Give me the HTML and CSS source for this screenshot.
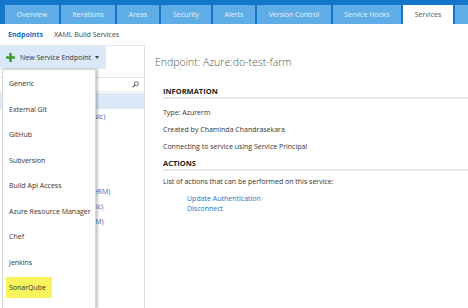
FILE: index.html
```html
<!DOCTYPE html>
<html lang="en">
<head>
  <meta charset="UTF-8" />
  <title>Services - Endpoints</title>
  <link rel="stylesheet" href="styles.css">
</head>
<body>
  <div class="tabs">
    <div class="tab">Overview</div>
    <div class="tab">Iterations</div>
    <div class="tab">Areas</div>
    <div class="tab">Security</div>
    <div class="tab">Alerts</div>
    <div class="tab">Version Control</div>
    <div class="tab">Service Hooks</div>
    <div class="tab tab-active">Services</div>
    <div class="tab"></div>
  </div>

  <div class="subnav">
    <span class="subnav-link subnav-link-active">Endpoints</span>
    <span class="subnav-link">XAML Build Services</span>
  </div>

  <div class="main">
    <div class="left-pane">
      <div class="toolbar">
        <div class="new-btn">
          <svg class="plus" width="9" height="9" viewBox="0 0 9 9"><path d="M3.2 0h2.6v3.2H9v2.6H5.8V9H3.2V5.8H0V3.2h3.2z" fill="#3c9a35"/></svg>
          <span>New Service Endpoint</span>
          <span class="caret"></span>
        </div>
      </div>
      <div class="search">
        <svg width="7" height="7" viewBox="0 0 7 7"><circle cx="4.3" cy="2.7" r="2" fill="none" stroke="#555" stroke-width="0.9"/><path d="M2.9 4.1L0.6 6.4" stroke="#555" stroke-width="1.1"/></svg>
      </div>
      <ul class="tree">
        <li class="tree-row tree-row-selected"></li>
        <li class="tree-row">Azure:do-old-farm1 (Classic)</li>
        <li class="tree-row"></li>
        <li class="tree-row"></li>
        <li class="tree-row"></li>
        <li class="tree-row"></li>
        <li class="tree-row">Azure:do-dev-farm (AzureRM)</li>
        <li class="tree-row">Azure:do-qa-farm1 (Classic)</li>
        <li class="tree-row">Azure:do-uat-vm (AzureRM)</li>
      </ul>

      <ul class="menu">
        <li class="menu-item">Generic</li>
        <li class="menu-item">External Git</li>
        <li class="menu-item">GitHub</li>
        <li class="menu-item">Subversion</li>
        <li class="menu-item">Build Api Access</li>
        <li class="menu-item">Azure Resource Manager</li>
        <li class="menu-item">Chef</li>
        <li class="menu-item">Jenkins</li>
        <li class="menu-item"><span class="highlight">SonarQube</span></li>
      </ul>
    </div>

    <div class="detail">
      <h1 class="detail-title">Endpoint: Azure:do-test-farm</h1>
      <div class="section">
        <h2 class="section-title">INFORMATION</h2>
        <p class="info info-first">Type: Azurerm</p>
        <p class="info">Created by Chaminda Chandrasekara</p>
        <p class="info">Connecting to service using Service Principal</p>
        <h2 class="section-title section-title-actions">ACTIONS</h2>
        <p class="info info-list">List of actions that can be performed on this service:</p>
        <div class="actions">
          <a class="action-link">Update Authentication</a>
          <a class="action-link">Disconnect</a>
        </div>
      </div>
    </div>
  </div>
</body>
</html>
```

FILE: styles.css
```css
body {
  margin: 0;
  font-family: "Open Sans", "Noto Sans", sans-serif;
  background: #fff;
  color: #333;
  overflow: hidden;
}

.tabs {
  display: flex;
  gap: 2px;
  height: 24px;
  padding: 5px 0 0 5px;
  box-sizing: border-box;
  background: #1376c9;
}

.tab {
  height: 19px;
  background: #5fade6;
  color: #e8f3fc;
  font-size: 7px;
  display: flex;
  align-items: center;
  justify-content: center;
}

.tab:nth-child(1),
.tab:nth-child(2) { width: 54px; }
.tab:nth-child(3),
.tab:nth-child(5) { width: 42px; }
.tab:nth-child(4) { width: 50px; }
.tab:nth-child(6) { width: 74px; }
.tab:nth-child(7) { width: 68px; }
.tab:nth-child(8) { width: 50px; }
.tab:nth-child(9) { flex: 1; }

.tab-active {
  background: #fff;
  color: #555;
}

.subnav {
  height: 21px;
  display: flex;
  align-items: center;
  gap: 11px;
  padding-left: 8px;
  font-size: 7px;
}

.subnav-link {
  color: #444;
}

.subnav-link-active {
  color: #1a6fbf;
  font-weight: bold;
}

.main {
  display: flex;
  height: 263px;
}

.left-pane {
  position: relative;
  width: 145px;
  flex: none;
  border-right: 1px solid #dedede;
  border-top: 1px solid #e6e6e6;
  box-sizing: border-box;
}

.toolbar {
  height: 23px;
}

.new-btn {
  width: 106px;
  height: 23px;
  box-sizing: border-box;
  background: #dbe8f7;
  display: flex;
  align-items: center;
  gap: 5px;
  padding-left: 6px;
  font-size: 7px;
  color: #333;
}

.caret {
  width: 0;
  height: 0;
  border-left: 2.5px solid transparent;
  border-right: 2.5px solid transparent;
  border-top: 3px solid #444;
  margin-left: -1px;
}

.search {
  margin-top: 8px;
  height: 15px;
  border-top: 1px solid #e3e3e3;
  border-bottom: 1px solid #ececec;
  box-sizing: border-box;
  display: flex;
  align-items: center;
  justify-content: flex-end;
  padding-right: 5px;
}

.tree {
  list-style: none;
  margin: 1px 0 0;
  padding: 0;
}

.tree-row {
  height: 15px;
  line-height: 15px;
  padding-left: 14px;
  font-size: 7px;
  color: #2a72c6;
  white-space: nowrap;
  overflow: hidden;
}

.tree-row-selected {
  height: 16px;
  background: #dbe8f8;
}

.menu {
  position: absolute;
  top: 23px;
  left: 2px;
  width: 94px;
  bottom: 0;
  margin: 0;
  padding: 1px 0 0;
  list-style: none;
  background: #fff;
  border: 1px solid #d6d6d6;
  border-bottom: none;
  box-sizing: border-box;
  box-shadow: 2px 0 2px rgba(0, 0, 0, 0.22);
}

.menu-item {
  height: 25.5px;
  line-height: 25.5px;
  padding-left: 6px;
  font-size: 7px;
  color: #333;
  white-space: nowrap;
}

.highlight {
  display: inline-block;
  line-height: 21px;
  padding: 0 6px 0 3px;
  margin-left: -3px;
  background: #f7f45c;
}

.detail {
  flex: 1;
  padding-left: 10px;
}

.detail-title {
  margin: 10px 0 0;
  font-size: 10.5px;
  line-height: 14px;
  font-weight: 300;
  color: #555;
}

.section {
  padding-left: 8px;
}

.section-title {
  margin: 16px 0 0;
  font-size: 7.5px;
  line-height: 12px;
  font-weight: bold;
  color: #222;
  border-bottom: 2px solid #e6e6e6;
}

.section-title-actions {
  margin-top: 4px;
}

.info {
  margin: 5px 0 0;
  font-size: 7px;
  line-height: 12px;
  color: #333;
}

.info-first {
  margin-top: 8px;
}

.info-list {
  margin-top: 5px;
}

.actions {
  display: flex;
  flex-direction: column;
  margin-top: 6px;
  padding-left: 24px;
}

.action-link {
  font-size: 7px;
  line-height: 10px;
  color: #2a72c6;
}
```
